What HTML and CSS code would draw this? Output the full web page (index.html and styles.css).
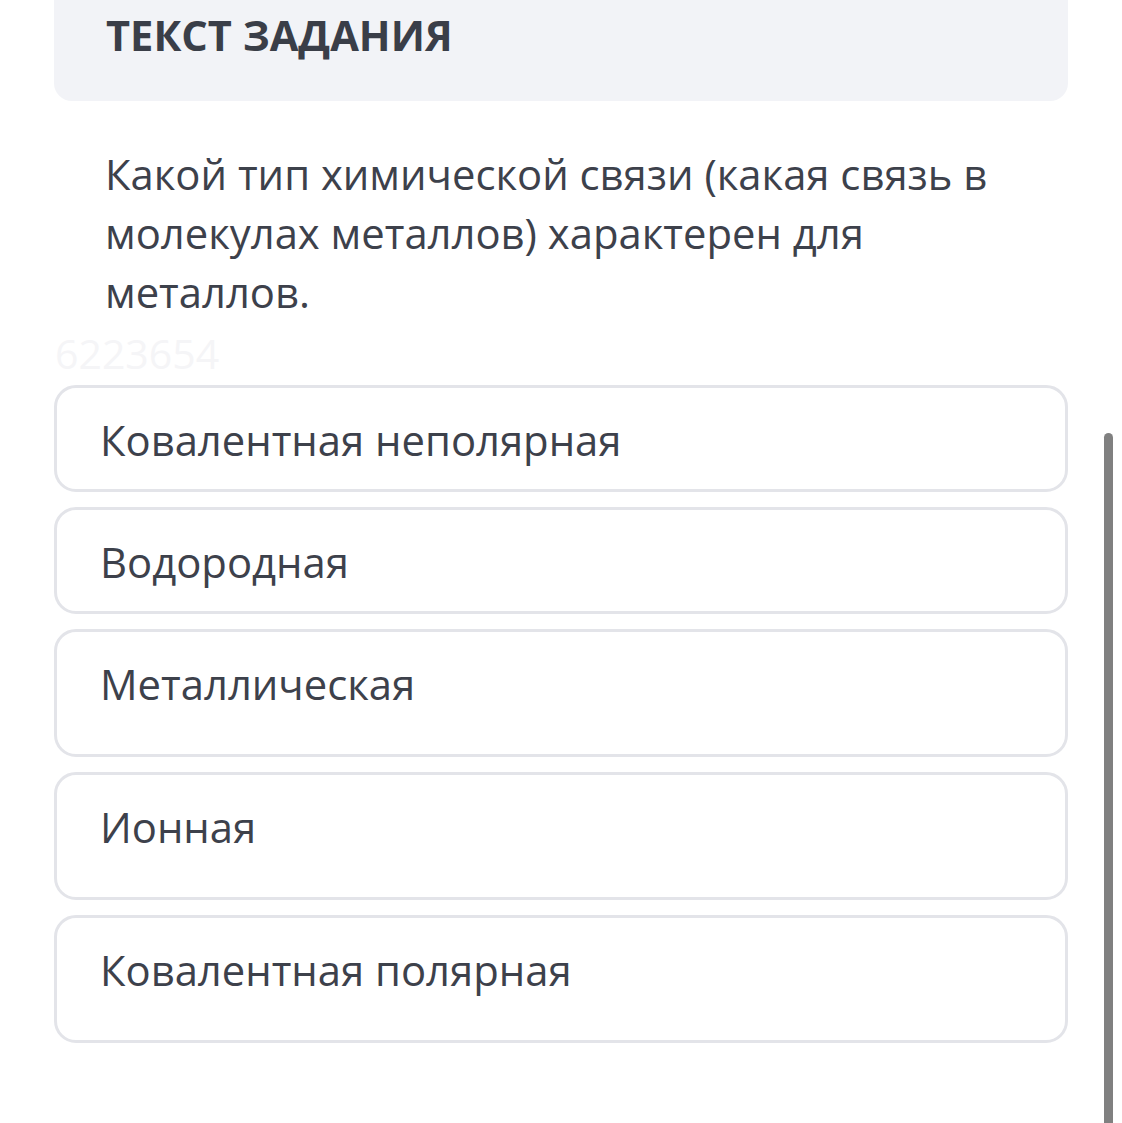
FILE: index.html
```html
<!DOCTYPE html>
<html lang="ru">
<head>
<meta charset="utf-8">
<link rel="stylesheet" href="styles.css">
</head>
<body>
<div class="page">
  <div class="header-card">
    <h2 class="header-title">ТЕКСТ ЗАДАНИЯ</h2>
  </div>
  <p class="question">Какой тип химической связи (какая связь в молекулах металлов) характерен для металлов.</p>
  <div class="watermark">6223654</div>
  <div class="options">
    <div class="option short">Ковалентная неполярная</div>
    <div class="option short">Водородная</div>
    <div class="option tall">Металлическая</div>
    <div class="option tall">Ионная</div>
    <div class="option tall">Ковалентная полярная</div>
  </div>
</div>
<div class="scrollbar"></div>
</body>
</html>
```

FILE: styles.css
```css
html, body {
  margin: 0;
  padding: 0;
  background: #ffffff;
  overflow: hidden;
}
body {
  width: 1122px;
  height: 1123px;
  position: relative;
  font-family: "Open Sans", "Noto Sans", sans-serif;
  color: #3d414b;
}
.page {
  padding: 0 54px;
}
.header-card {
  background: #f2f3f7;
  border-radius: 0 0 18px 18px;
  height: 101px;
  padding: 0 52px;
  box-sizing: border-box;
}
.header-title {
  margin: 0;
  padding-top: 9px;
  font-size: 41.6px;
  font-weight: 700;
  line-height: 52px;
  color: #3a3e48;
}
.question {
  margin: 0;
  padding: 43px 51px 0 51px;
  font-size: 41.8px;
  line-height: 59px;
}
.watermark {
  font-size: 41px;
  line-height: 44px;
  color: #f5f5f7;
  margin-top: 10px;
  padding-left: 1px;
}
.options {
  display: flex;
  flex-direction: column;
  gap: 15px;
  margin-top: 10px;
}
.option {
  border: 3px solid #e3e4e9;
  border-radius: 22px;
  box-sizing: border-box;
  padding: 22px 43px 0 43px;
  font-size: 41.8px;
  line-height: 60px;
}
.option.short { height: 107px; }
.option.tall { height: 128px; }
.scrollbar {
  position: absolute;
  left: 1104px;
  top: 433px;
  width: 9px;
  height: 700px;
  background: #808080;
  border-radius: 5px 5px 0 0;
}
```
